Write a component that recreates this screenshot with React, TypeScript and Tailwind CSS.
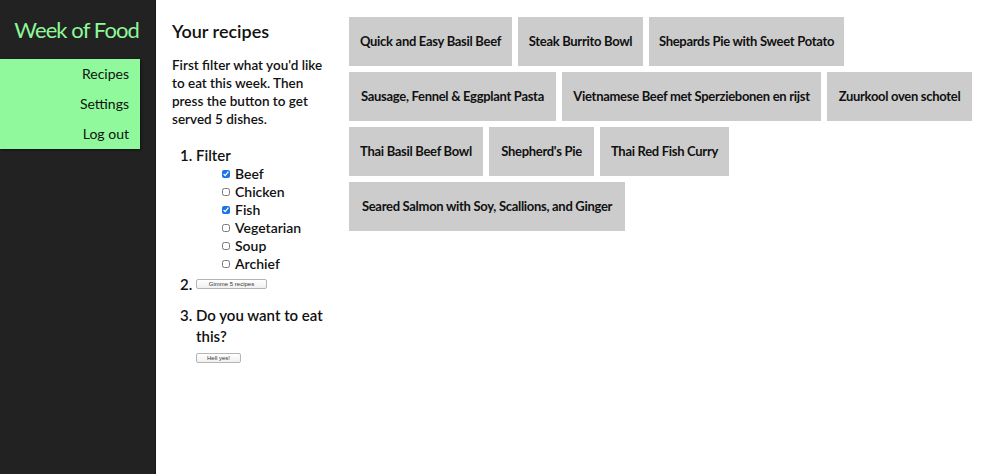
import React from 'react';

const RECIPES = [
  { name: 'Quick and Easy Basil Beef', w: 'w-[163px]' },
  { name: 'Steak Burrito Bowl', w: 'w-[125px]' },
  { name: 'Shepards Pie with Sweet Potato', w: 'w-[195px]' },
  { name: 'Sausage, Fennel & Eggplant Pasta', w: 'w-[207px]' },
  { name: 'Vietnamese Beef met Sperziebonen en rijst', w: 'w-[259px]' },
  { name: 'Zuurkool oven schotel', w: 'w-[145px]' },
  { name: 'Thai Basil Beef Bowl', w: 'w-[134px]' },
  { name: "Shepherd's Pie", w: 'w-[105px]' },
  { name: 'Thai Red Fish Curry', w: 'w-[129px]' },
  { name: 'Seared Salmon with Soy, Scallions, and Ginger', w: 'w-[276px]' },
];

const FILTERS = [
  { label: 'Beef', checked: true },
  { label: 'Chicken', checked: false },
  { label: 'Fish', checked: true },
  { label: 'Vegetarian', checked: false },
  { label: 'Soup', checked: false },
  { label: 'Archief', checked: false },
];

const Sidebar: React.FC = () => (
  <aside className="w-[156px] shrink-0 bg-[#222222] border-r border-[#1a1a1a] min-h-screen">
    <h1 className="pt-[14px] pr-[16px] text-right whitespace-nowrap text-[22px] leading-[32px] text-[#8ef99a] tracking-[-0.9px]">
      Week of Food
    </h1>
    <nav className="mt-[13px] w-[140px] bg-[#8ff99b] shadow-[1px_1px_2px_rgba(0,0,0,0.5)]">
      {['Recipes', 'Settings', 'Log out'].map((item) => (
        <a key={item} className="block pr-[11px] text-right text-[14px] leading-[30px] text-[#111]">
          {item}
        </a>
      ))}
    </nav>
  </aside>
);

const SmallButton: React.FC<{ label: string; w: string }> = ({ label, w }) => (
  <button className={`${w} h-[10px] align-middle rounded-[2px] border border-[#b5b5b5] bg-gradient-to-b from-white to-[#f0f0f0] text-[6px] leading-[8px] font-normal text-[#333] font-['Liberation_Sans',sans-serif]`}>
    {label}
  </button>
);

const App: React.FC = () => {
  return (
    <div className="flex min-h-screen bg-white text-[#111] font-['Lato',sans-serif]">
      <Sidebar />
      <section className="w-[160px] shrink-0 ml-[16px] pt-[19px]">
        <h2 className="text-[18px] leading-[24px] font-semibold">Your recipes</h2>
        <p className="mt-[13px] text-[13.5px] leading-[18px] font-semibold">
          First filter what you'd like to eat this week. Then press the button to get served 5 dishes.
        </p>
        <ol className="mt-[17px] pl-[24px] list-decimal text-[15px] font-semibold">
          <li className="leading-[20px]">
            Filter
            <ul className="pl-[26px]">
              {FILTERS.map((f) => (
                <li key={f.label} className="flex items-center h-[18px] text-[14px]">
                  <input
                    type="checkbox"
                    defaultChecked={f.checked}
                    className="w-[8px] h-[8px] mr-[5px] accent-[#1a73e8]"
                  />
                  {f.label}
                </li>
              ))}
            </ul>
          </li>
          <li className="leading-[20px] mt-[1px]">
            <span className="relative -top-[2px]">
              <SmallButton label="Gimme 5 recipes" w="w-[71px]" />
            </span>
          </li>
          <li className="mt-[11px] leading-[21px]">
            Do you want to eat this?
            <div className="flex mt-[6px]">
              <SmallButton label="Hell yes!" w="w-[45px]" />
            </div>
          </li>
        </ol>
      </section>
      <main className="flex-1 pt-[17px] pl-[17px] pr-[16px]">
        <div className="flex flex-wrap gap-[6px]">
          {RECIPES.map((r) => (
            <div
              key={r.name}
              className={`${r.w} h-[49px] bg-[#cccccc] flex items-center justify-center whitespace-nowrap text-[13px] font-bold tracking-[-0.3px] text-[#111]`}
            >
              {r.name}
            </div>
          ))}
        </div>
      </main>
    </div>
  );
};

export default App;
